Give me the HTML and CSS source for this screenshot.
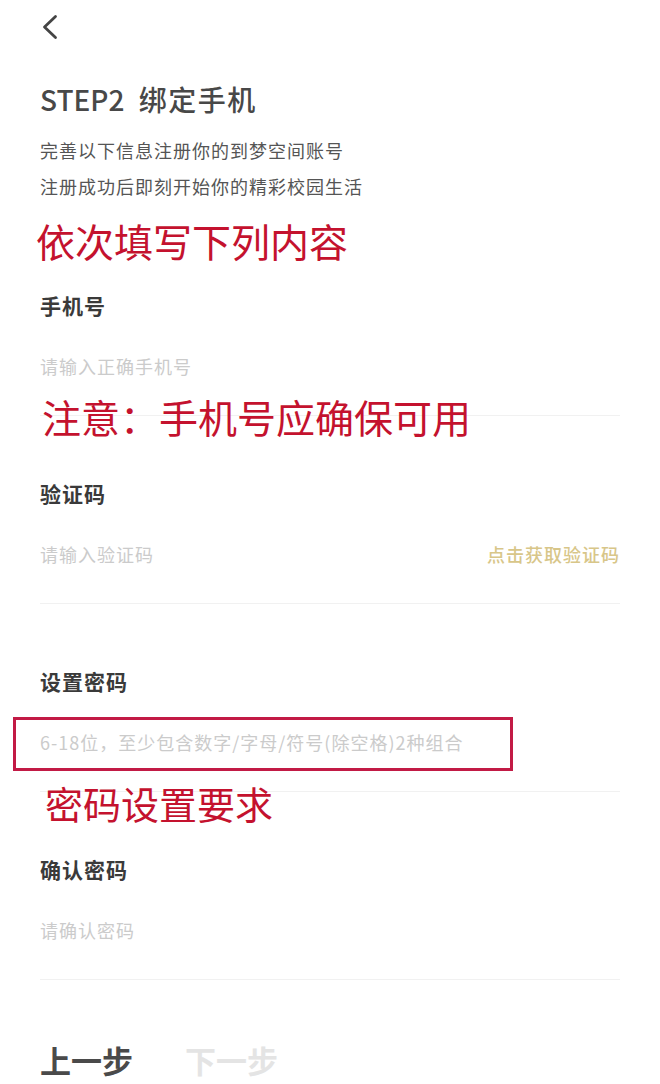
FILE: index.html
```html
<!DOCTYPE html>
<html lang="zh-CN">
<head>
<meta charset="utf-8">
<title>STEP2 绑定手机</title>
<link rel="stylesheet" href="styles.css">
</head>
<body>
<div class="page">
  <header class="topbar">
    <svg class="back" width="18" height="26" viewBox="0 0 18 26" aria-hidden="true">
      <polyline points="14.5,2.5 3.5,13 14.5,23.5" fill="none" stroke="#444" stroke-width="2.8" stroke-linecap="round" stroke-linejoin="round"/>
    </svg>
  </header>

  <section class="intro">
    <h1 class="title">STEP2 <span class="title-zh">绑定手机</span></h1>
    <p class="sub">完善以下信息注册你的到梦空间账号</p>
    <p class="sub">注册成功后即刻开始你的精彩校园生活</p>
  </section>

  <form class="form">
    <div class="field">
      <span class="note note-fill">依次填写下列内容</span>
      <div class="label">手机号</div>
      <div class="row"><span class="ph">请输入正确手机号</span></div>
      <span class="note note-phone">注意：手机号应确保可用</span>
    </div>

    <div class="field">
      <div class="label">验证码</div>
      <div class="row"><span class="ph">请输入验证码</span><span class="code">点击获取验证码</span></div>
    </div>

    <div class="field">
      <div class="label">设置密码</div>
      <div class="row">
        <span class="ph">6-18位，至少包含数字/字母/符号(除空格)2种组合</span>
        <span class="mark"></span>
      </div>
      <span class="note note-pwd">密码设置要求</span>
    </div>

    <div class="field">
      <div class="label">确认密码</div>
      <div class="row"><span class="ph">请确认密码</span></div>
    </div>
  </form>

  <nav class="steps">
    <span class="prev">上一步</span>
    <span class="next">下一步</span>
  </nav>
</div>
</body>
</html>
```

FILE: styles.css
```css
* { box-sizing: border-box; }
html, body { margin: 0; padding: 0; background: #fff; }
body {
  font-family: "Noto Sans CJK SC", "Noto Sans", sans-serif;
  color: #333;
}
.page {
  width: 660px;
  height: 1084px;
  padding: 0 40px;
  overflow: hidden;
}
.topbar {
  height: 54px;
  padding-top: 14px;
}
.back { display: block; margin-left: 1px; }

.intro { margin-top: 25px; }
.title {
  margin: 0;
  font-size: 28px;
  line-height: 40px;
  font-weight: 500;
  color: #484848;
  word-spacing: 8px;
}
.title-zh { letter-spacing: 1.5px; }
.sub {
  margin: 0;
  font-size: 18px;
  line-height: 36px;
  letter-spacing: 1px;
  color: #555;
}
.sub:first-of-type { margin-top: 13px; }

.form { margin-top: 24px; }
.field {
  position: relative;
  padding-top: 62px;
  padding-bottom: 34px;
  border-bottom: 1px solid #f1f1f1;
}
.label {
  font-size: 21px;
  line-height: 30px;
  font-weight: 700;
  letter-spacing: 1px;
  color: #3a3a3a;
}
.row {
  position: relative;
  margin-top: 31px;
  height: 30px;
  display: flex;
  justify-content: space-between;
  align-items: center;
}
.ph {
  font-size: 18px;
  letter-spacing: 1px;
  color: #cbcbcb;
}
.code {
  font-size: 18px;
  letter-spacing: 1px;
  font-weight: 500;
  color: #d8c689;
}
.mark {
  position: absolute;
  left: -27px;
  top: -10px;
  width: 500px;
  height: 54px;
  border: 3px solid #c21a45;
}
.note {
  position: absolute;
  white-space: nowrap;
  color: #c4122e;
  line-height: 40px;
}
.note-fill { top: -8px; left: -4px; font-size: 39px; }
.note-phone { top: 168px; left: 2px; font-size: 39px; }
.note-pwd { top: 179px; left: 5px; font-size: 38px; }

.steps {
  margin-top: 60px;
  display: flex;
  gap: 52px;
  font-size: 31px;
  line-height: 40px;
  font-weight: 700;
}
.prev { color: #4a4a4a; }
.next { color: #e4e4e4; }
```
